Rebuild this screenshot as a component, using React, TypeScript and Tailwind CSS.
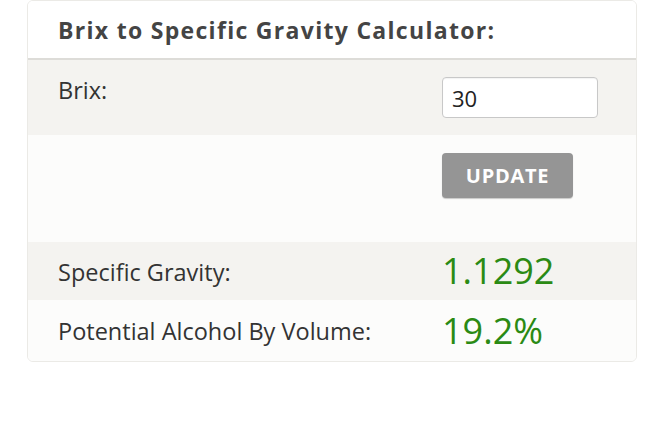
import React from "react";

export default function App() {
  return (
    <div className="w-[650px] h-[428px] bg-white" style={{ fontFamily: '"Open Sans", sans-serif' }}>
      <div className="ml-[27px] w-[610px] rounded-[6px] border border-[#ebeae6] overflow-hidden">
        <div className="h-[59px] bg-white border-b-2 border-[#dddcd8] pl-[30px] flex items-center">
          <h2 className="text-[23px] leading-[30px] font-bold text-[#444] tracking-[1.3px] pt-[1px]">
            Brix to Specific Gravity Calculator:
          </h2>
        </div>
        <div className="h-[75px] bg-[#f4f3f0] flex">
          <div className="w-[414px] pl-[30px] pt-[15px] text-[23.5px] leading-[31px] text-[#333]">Brix:</div>
          <div className="pt-[17px]">
            <input
              defaultValue="30"
              className="w-[156px] h-[41px] rounded-[4px] border border-[#c8c8c8] bg-white px-[9px] text-[22px] text-[#222] outline-none shadow-[inset_0_1px_1px_rgba(0,0,0,0.05)]"
            />
          </div>
        </div>
        <div className="h-[107px] bg-[#fcfcfb] flex">
          <div className="w-[414px]" />
          <div className="pt-[18px]">
            <button className="w-[131px] h-[45px] rounded-[4px] bg-[#959595] text-white font-bold text-[20px] tracking-[0.7px] shadow-[0_1px_1px_rgba(0,0,0,0.2)]">
              UPDATE
            </button>
          </div>
        </div>
        <div className="h-[58px] bg-[#f4f3f0] flex items-center">
          <div className="w-[414px] pl-[30px] pt-[2px] text-[23.5px] leading-[31px] text-[#333]">Specific Gravity:</div>
          <div className="text-[36px] leading-none text-[#2b8a14]">1.1292</div>
        </div>
        <div className="h-[61px] bg-[#fcfcfb] flex items-center">
          <div className="w-[414px] pl-[30px] pt-[2px] text-[23.5px] leading-[31px] text-[#333]">Potential Alcohol By Volume:</div>
          <div className="text-[36px] leading-none text-[#2b8a14]">19.2%</div>
        </div>
      </div>
    </div>
  );
}
